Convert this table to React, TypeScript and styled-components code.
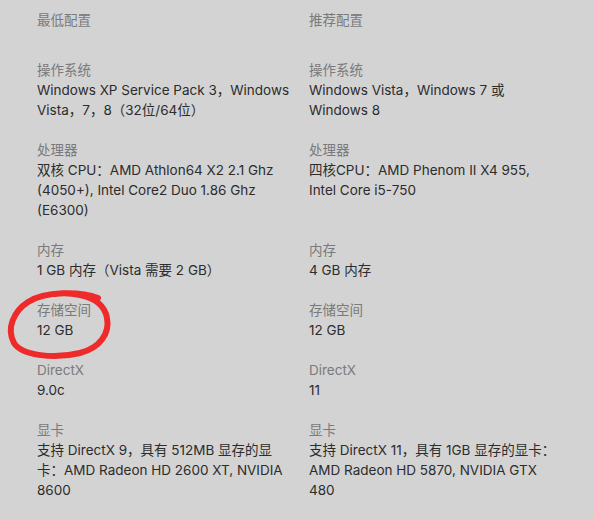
import styled, { createGlobalStyle } from "styled-components";

const GlobalStyle = createGlobalStyle`
  html, body {
    margin: 0;
    padding: 0;
    background: #d3d3d3;
  }
  body {
    font-family: Inter, "Noto Sans CJK SC", sans-serif;
  }
`;

const Page = styled.div`
  position: relative;
  width: 594px;
  height: 520px;
  overflow: hidden;
  background: #d3d3d3;
  box-sizing: border-box;
  padding: 10px 0 0 37px;
`;

const Grid = styled.div`
  display: grid;
  grid-template-columns: 272px 272px;
  row-gap: 20px;
  font-size: 13.5px;
  line-height: 20px;
`;

const Heading = styled.div`
  color: #7a7a7a;
  margin-bottom: 10px;
`;

const Cell = styled.div<{ $narrow?: boolean }>`
  display: flex;
  flex-direction: column;
  max-width: ${(props) => (props.$narrow ? "250px" : "262px")};
`;

const Label = styled.span`
  color: #7a7a7a;
`;

const Value = styled.span`
  color: #2c2c2c;
`;

const Circle = styled.svg`
  position: absolute;
  left: 0;
  top: 288px;
  pointer-events: none;
`;

interface Spec {
  label: string;
  min: string;
  rec: string;
}

const specs: Spec[] = [
  {
    label: "操作系统",
    min: "Windows XP Service Pack 3，Windows Vista，7，8（32位/64位）",
    rec: "Windows Vista，Windows 7 或 Windows 8",
  },
  {
    label: "处理器",
    min: "双核 CPU：AMD Athlon64 X2 2.1 Ghz (4050+), Intel Core2 Duo 1.86 Ghz (E6300)",
    rec: "四核CPU：AMD Phenom II X4 955, Intel Core i5-750",
  },
  {
    label: "内存",
    min: "1 GB 内存（Vista 需要 2 GB）",
    rec: "4 GB 内存",
  },
  {
    label: "存储空间",
    min: "12 GB",
    rec: "12 GB",
  },
  {
    label: "DirectX",
    min: "9.0c",
    rec: "11",
  },
  {
    label: "显卡",
    min: "支持 DirectX 9，具有 512MB 显存的显卡：AMD Radeon HD 2600 XT, NVIDIA 8600",
    rec: "支持 DirectX 11，具有 1GB 显存的显卡：AMD Radeon HD 5870, NVIDIA GTX 480",
  },
];

function App() {
  return (
    <>
      <GlobalStyle />
      <Page>
        <Grid>
          <Heading>最低配置</Heading>
          <Heading>推荐配置</Heading>
          {specs.map((s) => (
            <>
              <Cell key={s.label + "-min"}>
                <Label>{s.label}</Label>
                <Value>{s.min}</Value>
              </Cell>
              <Cell key={s.label + "-rec"} $narrow>
                <Label>{s.label}</Label>
                <Value>{s.rec}</Value>
              </Cell>
            </>
          ))}
        </Grid>
        {/* hand-drawn annotation around the storage row */}
        <Circle width="120" height="76" viewBox="0 0 120 76">
          <path
            d="M98 10 C80 3 45 3 28 14 C14 23 6 40 14 55 C22 68 55 71 80 65 C100 60 110 45 107 30 C105 18 95 10 80 7 C70 5 62 5 55 6"
            fill="none"
            stroke="#ee2a2a"
            strokeWidth="6"
            strokeLinecap="round"
            strokeLinejoin="round"
          />
        </Circle>
      </Page>
    </>
  );
}

export default App;
